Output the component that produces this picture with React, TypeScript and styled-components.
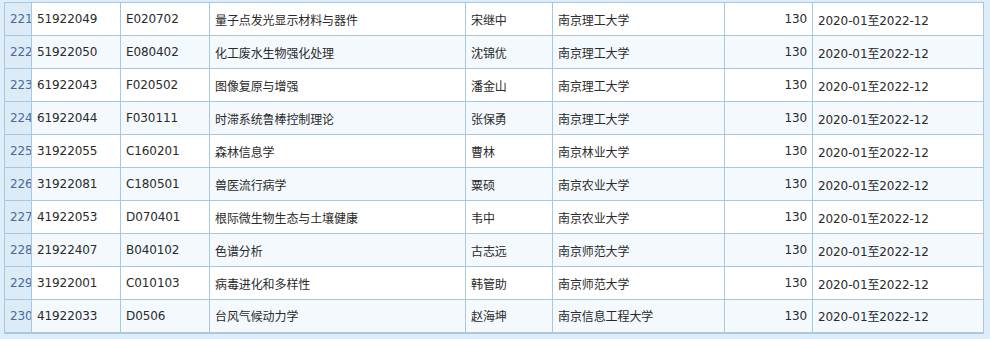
import React from 'react';
import styled, { createGlobalStyle } from 'styled-components';

const GlobalStyle = createGlobalStyle`
  html, body {
    margin: 0;
    padding: 0;
    background: #deedf7;
    overflow: hidden;
  }
`;

const Wrapper = styled.div`
  padding: 2px 6px 0 4px;
  font-family: 'DejaVu Sans', Verdana, 'Noto Sans CJK SC', sans-serif;
  font-size: 12px;
  color: #2a2a2a;
`;

const Grid = styled.table`
  border-collapse: collapse;
  table-layout: fixed;
  width: 979px;
  border-bottom: 2px solid #a8c8e1;
`;

const Row = styled.tr<{ $alt: boolean }>`
  height: 33px;
  background: ${(p) => (p.$alt ? '#f4f9fe' : '#ffffff')};
`;

const Cell = styled.td<{ $right?: boolean }>`
  border: 1px solid #a8c8e1;
  padding: 0 5px;
  white-space: nowrap;
  overflow: hidden;
  text-align: ${(p) => (p.$right ? 'right' : 'left')};
  letter-spacing: -0.1px;
`;

const NumCell = styled(Cell)`
  background: #dcebf6;
  color: #4a6a9c;
  padding: 0 0 0 5px;
  text-overflow: clip;
`;

interface Item {
  no: number;
  id: string;
  code: string;
  title: string;
  person: string;
  org: string;
  fund: number;
  period: string;
}

const items: Item[] = [
  { no: 221, id: '51922049', code: 'E020702', title: '量子点发光显示材料与器件', person: '宋继中', org: '南京理工大学', fund: 130, period: '2020-01至2022-12' },
  { no: 222, id: '51922050', code: 'E080402', title: '化工废水生物强化处理', person: '沈锦优', org: '南京理工大学', fund: 130, period: '2020-01至2022-12' },
  { no: 223, id: '61922043', code: 'F020502', title: '图像复原与增强', person: '潘金山', org: '南京理工大学', fund: 130, period: '2020-01至2022-12' },
  { no: 224, id: '61922044', code: 'F030111', title: '时滞系统鲁棒控制理论', person: '张保勇', org: '南京理工大学', fund: 130, period: '2020-01至2022-12' },
  { no: 225, id: '31922055', code: 'C160201', title: '森林信息学', person: '曹林', org: '南京林业大学', fund: 130, period: '2020-01至2022-12' },
  { no: 226, id: '31922081', code: 'C180501', title: '兽医流行病学', person: '粟硕', org: '南京农业大学', fund: 130, period: '2020-01至2022-12' },
  { no: 227, id: '41922053', code: 'D070401', title: '根际微生物生态与土壤健康', person: '韦中', org: '南京农业大学', fund: 130, period: '2020-01至2022-12' },
  { no: 228, id: '21922407', code: 'B040102', title: '色谱分析', person: '古志远', org: '南京师范大学', fund: 130, period: '2020-01至2022-12' },
  { no: 229, id: '31922001', code: 'C010103', title: '病毒进化和多样性', person: '韩管助', org: '南京师范大学', fund: 130, period: '2020-01至2022-12' },
  { no: 230, id: '41922033', code: 'D0506', title: '台风气候动力学', person: '赵海坤', org: '南京信息工程大学', fund: 130, period: '2020-01至2022-12' },
];

const widths = [27, 89, 89, 256, 87, 172, 88, 171];

const App: React.FC = () => {
  return (
    <>
      <GlobalStyle />
      <Wrapper>
        <Grid>
          <colgroup>
            {widths.map((w, i) => (
              <col key={i} style={{ width: w }} />
            ))}
          </colgroup>
          <tbody>
            {items.map((it, i) => (
              <Row key={it.no} $alt={i % 2 === 1}>
                <NumCell>{it.no}</NumCell>
                <Cell>{it.id}</Cell>
                <Cell>{it.code}</Cell>
                <Cell>{it.title}</Cell>
                <Cell>{it.person}</Cell>
                <Cell>{it.org}</Cell>
                <Cell $right>{it.fund}</Cell>
                <Cell>{it.period}</Cell>
              </Row>
            ))}
          </tbody>
        </Grid>
      </Wrapper>
    </>
  );
};

export default App;
